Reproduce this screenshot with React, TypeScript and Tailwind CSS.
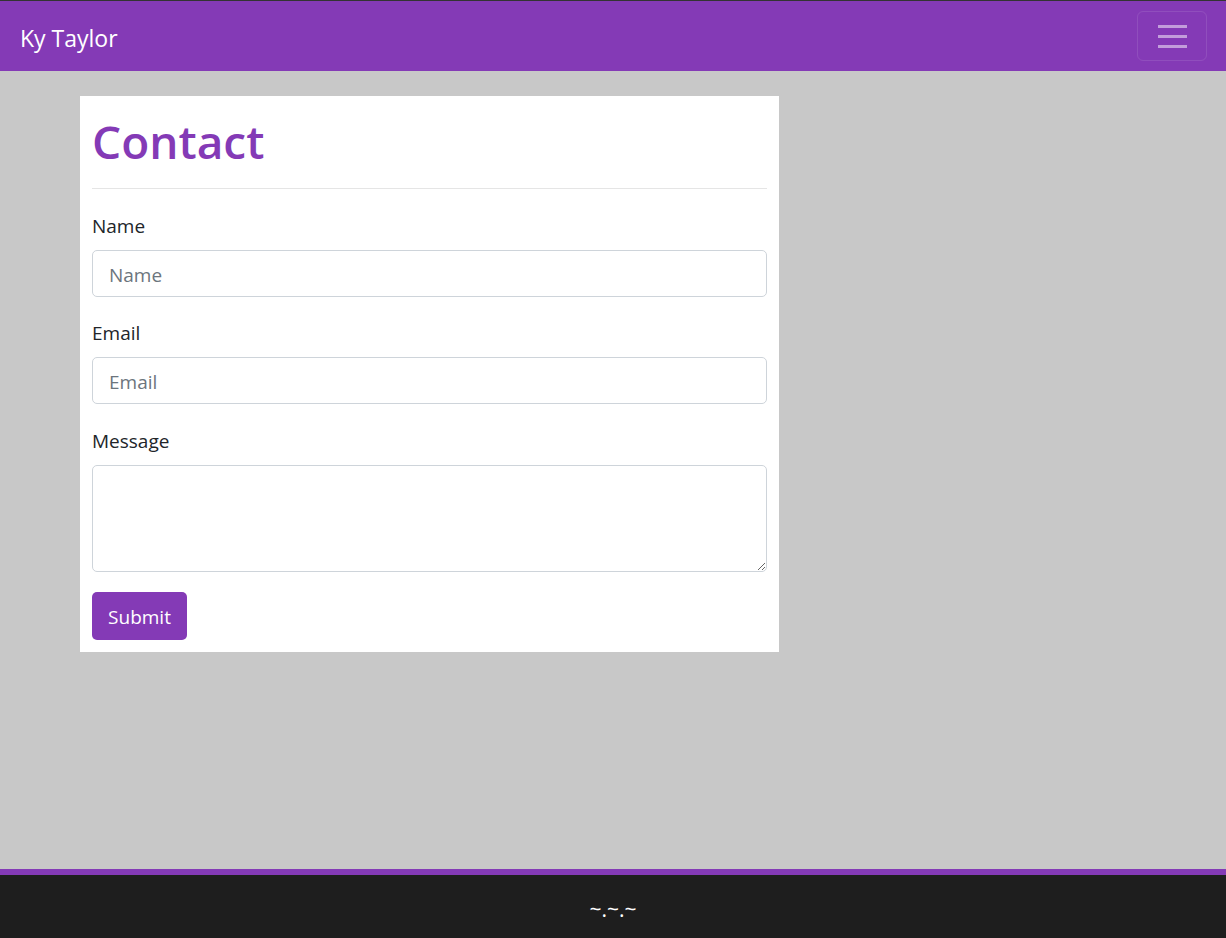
export default function App() {
  return (
    <div
      className="flex min-h-screen flex-col border-t border-[#333333] bg-[#c8c8c8] text-[#212529]"
      style={{ fontFamily: '"Open Sans", "Noto Sans", sans-serif' }}
    >
      {/* Navbar */}
      <nav className="flex h-[70px] items-center justify-between bg-[#843ab6] pl-5 pr-[19px]">
        <a href="#" className="pt-1 text-[23px] text-white">
          Ky Taylor
        </a>
        <button className="flex h-[50px] w-[70px] flex-col items-center justify-center gap-[7px] rounded-md border border-white/10">
          <span className="h-[3px] w-[29px] bg-white/50" />
          <span className="h-[3px] w-[29px] bg-white/50" />
          <span className="h-[3px] w-[29px] bg-white/50" />
        </button>
      </nav>

      {/* Main */}
      <main className="flex-1 px-20 pt-[25px]">
        <div className="w-[699px] bg-white p-3">
          <h1 className="flex h-[60px] items-center pt-[6px] text-[46px] font-semibold leading-none text-[#843ab6]">
            Contact
          </h1>
          <hr className="mt-5 border-t border-[#e5e5e5]" />

          <form className="mt-[22px]" onSubmit={(e) => e.preventDefault()}>
            <div className="mb-[21px]">
              <label className="mb-[9px] block text-[19px] leading-[30px]">Name</label>
              <input
                placeholder="Name"
                className="block h-[47px] w-full rounded-[5px] border border-[#ced4da] px-4 pt-[2px] text-[19px] text-[#495057] placeholder:text-[#6c757d] outline-none"
              />
            </div>
            <div className="mb-[22px]">
              <label className="mb-[9px] block text-[19px] leading-[30px]">Email</label>
              <input
                placeholder="Email"
                className="block h-[47px] w-full rounded-[5px] border border-[#ced4da] px-4 pt-[3px] text-[19px] text-[#495057] placeholder:text-[#6c757d] outline-none"
              />
            </div>
            <div className="mb-5">
              <label className="mb-[9px] block text-[19px] leading-[30px]">Message</label>
              <textarea className="block h-[107px] w-full rounded-[5px] border border-[#ced4da] px-4 py-2 text-[19px] outline-none" />
            </div>
            <button
              type="submit"
              className="h-12 w-[95px] rounded-[5px] bg-[#843ab6] pt-[2px] text-[19px] text-white"
            >
              Submit
            </button>
          </form>
        </div>
      </main>

      {/* Footer */}
      <footer className="flex h-[69px] items-center justify-center border-t-[6px] border-[#843ab6] bg-[#1e1e1e] pt-[6px] text-[21px] text-white">
        ~.~.~
      </footer>
    </div>
  );
}
